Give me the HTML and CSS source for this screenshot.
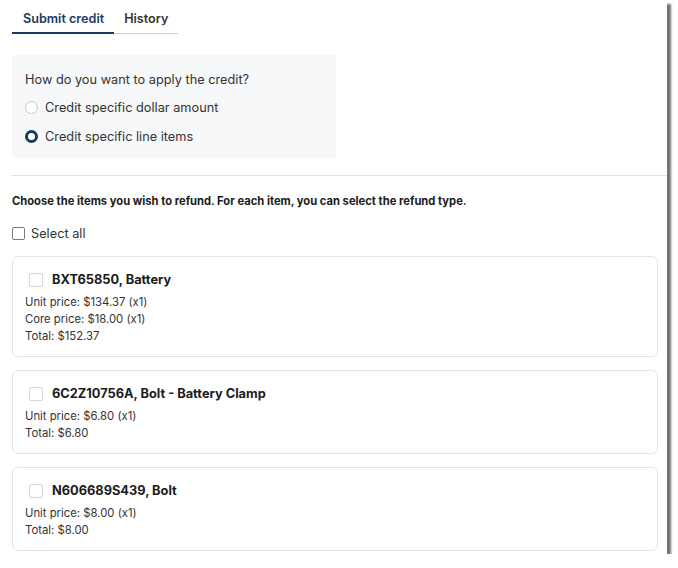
FILE: index.html
```html
<!DOCTYPE html>
<html lang="en">
<head>
<meta charset="UTF-8">
<meta name="viewport" content="width=device-width, initial-scale=1.0">
<title>Submit credit</title>
<link rel="stylesheet" href="styles.css">
</head>
<body>

<div class="frame">
    <div class="tabs">
        <div class="tab active">Submit credit</div>
        <div class="tab">History</div>
    </div>

    <div class="apply-box">
        <p class="apply-question">How do you want to apply the credit?</p>
        <label class="radio-row">
            <span class="radio"></span>
            Credit specific dollar amount
        </label>
        <label class="radio-row">
            <span class="radio checked"></span>
            Credit specific line items
        </label>
    </div>

    <div class="divider"></div>

    <p class="instructions">Choose the items you wish to refund. For each item, you can select the refund type.</p>

    <label class="select-all">
        <span class="checkbox dark"></span>
        Select all
    </label>

    <div class="item-card">
        <div class="item-title">
            <span class="checkbox"></span>
            BXT65850, Battery
        </div>
        <div class="item-line">Unit price: $134.37 (x1)</div>
        <div class="item-line">Core price: $18.00 (x1)</div>
        <div class="item-line">Total: $152.37</div>
    </div>

    <div class="item-card">
        <div class="item-title">
            <span class="checkbox"></span>
            6C2Z10756A, Bolt - Battery Clamp
        </div>
        <div class="item-line">Unit price: $6.80 (x1)</div>
        <div class="item-line">Total: $6.80</div>
    </div>

    <div class="item-card">
        <div class="item-title">
            <span class="checkbox"></span>
            N606689S439, Bolt
        </div>
        <div class="item-line">Unit price: $8.00 (x1)</div>
        <div class="item-line">Total: $8.00</div>
    </div>
</div>

</body>
</html>
```

FILE: styles.css
```css
body {
    margin: 0;
    background: #ffffff;
    font-family: Inter, "Noto Sans", Arial, sans-serif;
    color: #222222;
}
.frame {
    width: 657px;
    height: 554px;
    padding-left: 10px;
    background: #ffffff;
    box-shadow: 4px 4px 2px rgba(0, 0, 0, 0.55);
    overflow: hidden;
}
.tabs {
    display: flex;
    margin-left: 2px;
}
.tab {
    padding: 11px 10px 7px 10px;
    font-size: 12.6px;
    line-height: 15px;
    font-weight: 600;
    color: #333333;
    border-bottom: 1px solid #cfcfcf;
}
.tab.active {
    padding-left: 11px;
    padding-bottom: 6px;
    color: #173a63;
    border-bottom: 2px solid #173a63;
}
.apply-box {
    width: 298px;
    margin: 21px 0 0 2px;
    padding: 16px 13px 7px 13px;
    background: #f7f8fa;
}
.apply-question {
    margin: 0 0 5px 0;
    font-size: 12.75px;
    line-height: 17px;
    color: #333333;
}
.radio-row {
    display: flex;
    align-items: center;
    gap: 7px;
    height: 29px;
    font-size: 12.75px;
    color: #333333;
}
.radio {
    width: 11px;
    height: 11px;
    border: 1px solid #c9c9c9;
    border-radius: 50%;
    background: #ffffff;
}
.radio.checked {
    width: 7px;
    height: 7px;
    border: 3px solid #173a63;
}
.divider {
    height: 1px;
    margin: 17px 0 0 1px;
    background: #e2e2e2;
}
.instructions {
    margin: 18px 0 0 2px;
    font-size: 11.2px;
    line-height: 14px;
    font-weight: 700;
    color: #1c1c1c;
}
.select-all {
    display: flex;
    align-items: center;
    gap: 6px;
    margin: 17px 0 0 2px;
    font-size: 12.75px;
    line-height: 17px;
    color: #333333;
}
.checkbox {
    width: 11px;
    height: 11px;
    border: 1px solid #7a7a7a;
    border-radius: 2px;
    background: #ffffff;
}
.item-card .checkbox {
    width: 12px;
    height: 12px;
    border-color: #d5d5d5;
}
.item-card {
    width: 620px;
    margin: 14px 0 0 2px;
    padding: 14px 12px 11px 12px;
    border: 1px solid #e3e3e3;
    border-radius: 6px;
}
.item-card + .item-card {
    margin-top: 13px;
}
.item-title {
    display: flex;
    align-items: center;
    gap: 9px;
    margin: 0 0 6px 4px;
    font-size: 12.8px;
    line-height: 17px;
    font-weight: 700;
    color: #1c1c1c;
}
.item-line {
    font-size: 11.3px;
    line-height: 17px;
    color: #333333;
}
```
